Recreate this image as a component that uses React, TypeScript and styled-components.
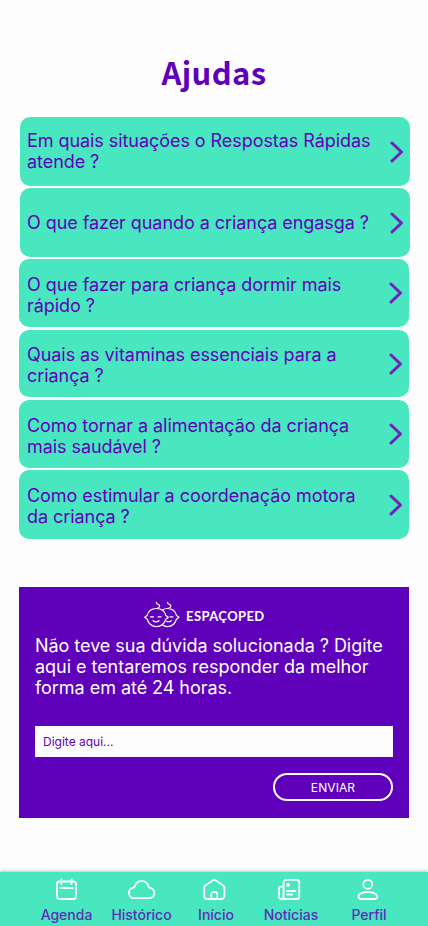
import type { FC, ReactNode } from 'react'
import { useState } from 'react'
import styled, { createGlobalStyle } from 'styled-components'

interface Question {
  id: string
  text: string
  height: number
  gap: number
  wide?: boolean
}

const questions: Question[] = [
  { id: 'situacoes', text: 'Em quais situações o Respostas Rápidas atende ?', height: 69, gap: 2, wide: true },
  { id: 'engasgo', text: 'O que fazer quando a criança engasga ?', height: 69, gap: 2, wide: true },
  { id: 'dormir', text: 'O que fazer para criança dormir mais rápido ?', height: 68, gap: 3 },
  { id: 'vitaminas', text: 'Quais as vitaminas essenciais para a criança ?', height: 67, gap: 3 },
  { id: 'alimentacao', text: 'Como tornar a alimentação da criança mais saudável ?', height: 68, gap: 2 },
  { id: 'motora', text: 'Como estimular a coordenação motora da criança ?', height: 69, gap: 0 }
]

interface Tab {
  label: string
  icon: ReactNode
  width: number
}

const tabs: Tab[] = [
  {
    label: 'Agenda',
    width: 75,
    icon: (
      <>
        <rect x="2" y="3.500" width="19" height="17.500" rx="2.500" />
        <path d="M6.400 1.500v4.500M16.600 1.500v4.500M5.500 10h12" />
      </>
    )
  },
  {
    label: 'Histórico',
    width: 75,
    icon: (
      <path d="M3.900 20.200h15.400a5.200 5.200 0 0 0 .8-10.300c-1.200-.2-1.500-.9-1.700-1.800a7.100 7.100 0 0 0-13.600 0c-.2.900-.5 1.600-1.700 1.800a5.200 5.200 0 0 0 .8 10.300z" />
    )
  },
  {
    label: 'Início',
    width: 74,
    icon: (
      <>
        <path d="M3.300 21h13.900a3.200 3.200 0 0 0 3.200-3.200V9.600c0-.9-.4-1.700-1.200-2.200l-7.700-5.200a2.200 2.200 0 0 0-2.400 0L1.400 7.400C.6 7.900.2 8.700.2 9.600v8.300A3.100 3.100 0 0 0 3.300 21z" />
        <path d="M7.300 21v-4.700a2.200 2.200 0 0 1 2.200-2.200h1.600a2.200 2.200 0 0 1 2.200 2.200V21" />
      </>
    )
  },
  {
    label: 'Notícias',
    width: 76,
    icon: (
      <>
        <path d="M4.600 18.500V4.500A2.700 2.700 0 0 1 7.300 1.800h10.300a2.700 2.700 0 0 1 2.700 2.700v13.800A2.700 2.700 0 0 1 17.600 21H2.400A2.400 2.400 0 0 1 0 18.600v-8.300a1.600 1.600 0 0 1 1.600-1.600h3v9.800A2.500 2.500 0 0 1 2.400 21" />
        <path d="M8 13h8.500M8 16.500h5" />
        <circle cx="9" cy="7" r="1" fill="#fff" />
      </>
    )
  },
  {
    label: 'Perfil',
    width: 80,
    icon: (
      <>
        <circle cx="10.800" cy="6.300" r="4.500" />
        <path d="M1.500 18.600c0-2.700 4.200-4.600 9.300-4.600s9.300 1.900 9.300 4.600c0 1.800-1.100 2.400-2.500 2.400H4c-1.400 0-2.500-.6-2.500-2.400z" />
      </>
    )
  }
]

const BabiesLogo: FC = () => (
  <LogoMark viewBox="0 0 36 28" fill="none" stroke="#fff" strokeWidth="1.2" strokeLinecap="round" strokeLinejoin="round">
    <path d="M12.500 7.500c-4.900 0-8.300 2.900-9.300 7L.7 16.200l2.500 2c1.500 4.500 4.900 7.400 9.300 7.400s7.800-2.900 9.300-7.400l2.500-2-2.500-1.700c-1-4.100-4.400-7-9.300-7z" />
    <path d="M18.500 8.900a8.800 8.800 0 0 1 5-1.400c4.800 0 8 2.900 9 7l2.500 1.700-2.500 2c-1.500 4.500-4.700 7.400-9 7.400a8.300 8.300 0 0 1-5-1.600" />
    <path d="M12.500 7.500c3.200-.6 4-2.800 2.200-3.900-1.500-.2-2.300-.8-2.400-2.300M23.700 7.500c3.200-.6 4-2.800 2.200-3.900-1.500-.2-2.300-.8-2.400-2.300" />
    <path d="M6.500 15.800h3M14 15.800h3M9 19.700c1.900 1.600 4.200 1.600 6.100 0M26 15.800h3M22.500 20.200c1.800.9 3.300.7 4.700-.5" />
  </LogoMark>
)

const App: FC = () => {
  const [message, setMessage] = useState('')

  return (
    <>
      <GlobalStyle />
      <Screen>
        <Title>Ajudas</Title>
        <QuestionList>
          {questions.map(({ id, text, height, gap, wide }) => (
            <QuestionCard key={id} type="button" $height={height} $gap={gap} $wide={wide}>
              <QuestionText $wide={wide}>{text}</QuestionText>
              <Chevron viewBox="0 0 14 22">
                <path d="M2 2l9.500 9L2 20" />
              </Chevron>
            </QuestionCard>
          ))}
        </QuestionList>
        <ContactForm onSubmit={(event) => event.preventDefault()}>
          <Brand>
            <BabiesLogo />
            <BrandName>ESPAÇOPED</BrandName>
          </Brand>
          <ContactText>
            Não teve sua dúvida solucionada ? Digite aqui e tentaremos responder da melhor forma em até 24 horas.
          </ContactText>
          <MessageInput
            value={message}
            placeholder="Digite aqui..."
            onChange={(event) => setMessage(event.target.value)}
          />
          <SendButton type="submit">ENVIAR</SendButton>
        </ContactForm>
        <TabBar>
          {tabs.map(({ label, icon, width }) => (
            <TabItem key={label} type="button" $width={width}>
              <TabIcon viewBox="0 0 24 24">{icon}</TabIcon>
              <TabLabel>{label}</TabLabel>
            </TabItem>
          ))}
        </TabBar>
      </Screen>
    </>
  )
}

const GlobalStyle = createGlobalStyle`
  * {
    box-sizing: border-box;
  }

  body {
    margin: 0;
    background: #fdfdfd;
    font-family: Inter, 'Liberation Sans', sans-serif;
  }

  button,
  input {
    font-family: inherit;
  }
`

const Screen = styled.main`
  display: flex;
  flex-direction: column;
  width: 428px;
  height: 926px;
  background: #fdfdfd;
  overflow: hidden;
`

const Title = styled.h1`
  margin: 48px 0 21px;
  height: 48px;
  color: #5f00ba;
  font-family: 'Noto Sans CJK JP', 'Noto Sans', sans-serif;
  font-size: 31px;
  font-weight: 700;
  line-height: 48px;
  letter-spacing: 0.4px;
  text-align: center;
`

const QuestionList = styled.div`
  display: flex;
  flex-direction: column;
  padding: 0 18px 0 19px;
`

const QuestionCard = styled.button<{ $height: number; $gap: number; $wide?: boolean }>`
  display: flex;
  align-items: center;
  justify-content: space-between;
  width: 390px;
  height: ${(props) => props.$height}px;
  margin: 0 0 ${(props) => props.$gap}px ${(props) => (props.$wide ? 1 : 0)}px;
  padding: 0 6px 0 ${(props) => (props.$wide ? 7 : 8)}px;
  border: 0;
  border-radius: 10px;
  background: #48e7bf;
  text-align: left;
  cursor: pointer;
`

const QuestionText = styled.span<{ $wide?: boolean }>`
  width: 352px;
  padding: ${(props) => (props.$wide ? '0 0 1px' : '3px 0 0')};
  color: #5f00ba;
  font-size: 18px;
  line-height: 21px;
  letter-spacing: -0.06px;
`

const Chevron = styled.svg`
  flex: none;
  width: 14px;
  height: 22px;
  fill: none;
  stroke: #7320bd;
  stroke-width: 3;
  stroke-linecap: round;
  stroke-linejoin: round;
`

const ContactForm = styled.form`
  display: flex;
  flex-direction: column;
  width: 390px;
  height: 231px;
  margin: 48px 0 0 19px;
  padding: 14px 16px 17px;
  background: #5f00ba;
`

const Brand = styled.div`
  display: flex;
  align-items: center;
  gap: 6px;
  height: 28px;
  padding-left: 109px;
`

const LogoMark = styled.svg`
  width: 36px;
  height: 28px;
`

const BrandName = styled.span`
  padding-top: 2px;
  color: #fff;
  font-family: Lato, sans-serif;
  font-size: 13px;
  font-weight: 700;
  line-height: 16px;
  letter-spacing: 0.4px;
`

const ContactText = styled.p`
  margin: 6px 0 28px;
  color: #fff;
  font-size: 18px;
  line-height: 21px;
  letter-spacing: -0.04px;
`

const MessageInput = styled.input`
  height: 31px;
  padding: 0 8px;
  border: 0;
  border-radius: 0;
  outline: none;
  background: #fdfdfd;
  color: #5f00ba;
  font-size: 12px;

  &::placeholder {
    color: #5f00ba;
    opacity: 1;
  }
`

const SendButton = styled.button`
  align-self: flex-end;
  width: 120px;
  height: 28px;
  margin-top: 16px;
  padding: 1px 0 0;
  border: 2px solid #fff;
  border-radius: 14px;
  background: transparent;
  color: #fff;
  font-size: 12px;
  letter-spacing: 0.1px;
  cursor: pointer;
`

const TabBar = styled.nav`
  display: flex;
  height: 54px;
  margin-top: auto;
  padding-left: 29px;
  background: #48e7bf;
  box-shadow: 0 -1px 3px rgba(60, 40, 100, 0.3);
`

const TabItem = styled.button<{ $width: number }>`
  display: flex;
  flex: none;
  flex-direction: column;
  align-items: center;
  width: ${(props) => props.$width}px;
  padding: 6px 0 0;
  border: 0;
  background: transparent;
  cursor: pointer;
`

const TabIcon = styled.svg`
  width: 24px;
  height: 24px;
  overflow: visible;
  fill: none;
  stroke: #fff;
  stroke-width: 1.8;
  stroke-linecap: round;
  stroke-linejoin: round;
`

const TabLabel = styled.span`
  margin-top: 4px;
  color: #5f2bba;
  font-size: 14px;
  font-weight: 500;
  line-height: 18px;
`

export default App
